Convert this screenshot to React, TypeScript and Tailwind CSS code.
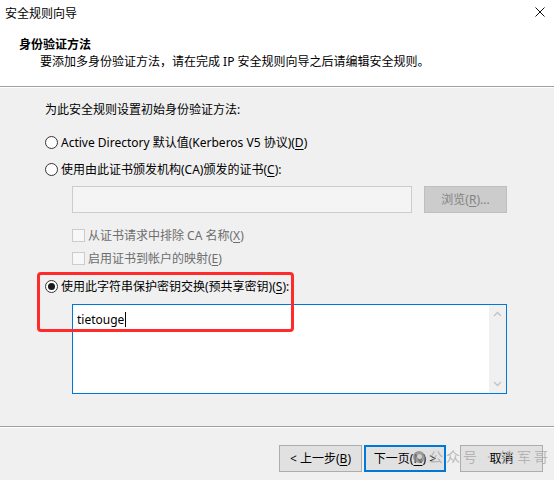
import { ReactNode } from "react";

function U({ children }: { children: ReactNode }) {
  return <span className="underline underline-offset-2">{children}</span>;
}

function Radio({ checked }: { checked?: boolean }) {
  return (
    <span className="flex h-[13px] w-[13px] shrink-0 items-center justify-center rounded-full border border-[#333333] bg-white">
      {checked && <span className="h-[7px] w-[7px] rounded-full bg-[#1a1a1a]" />}
    </span>
  );
}

function Check() {
  return <span className="h-[13px] w-[13px] shrink-0 border border-[#cccccc] bg-[#f7f7f7]" />;
}

function App() {
  return (
    <div className="relative h-[480px] w-[554px] overflow-hidden bg-[#f0f0f0] font-['Noto_Sans','Noto_Sans_CJK_SC',sans-serif] text-[12px] leading-[17px] text-black">
      {/* Header */}
      <div className="h-[86px] bg-white">
        <div className="flex h-[26px] items-center justify-between pl-[5px] pr-[9px]">
          <span>安全规则向导</span>
          <svg width="10" height="10" viewBox="0 0 10 10" className="mt-[-2px]">
            <path d="M0.5 0.5 L9.5 9.5 M9.5 0.5 L0.5 9.5" stroke="#111" strokeWidth="1" />
          </svg>
        </div>
        <div className="mt-[10px] pl-[19px] font-bold">身份验证方法</div>
        <div className="pl-[40px]">要添加多身份验证方法，请在完成 IP 安全规则向导之后请编辑安全规则。</div>
      </div>
      <div className="h-px bg-[#a0a0a0]" />
      <div className="h-px bg-white" />

      {/* Body */}
      <div className="flex h-[338px] flex-col pl-[45px]">
        <div className="mt-[13px] h-[17px]">为此安全规则设置初始身份验证方法:</div>
        <div className="mt-[16px] flex h-[17px] items-center gap-[3px]">
          <Radio />
          <span>
            Active Directory 默认值(Kerberos V5 协议)(<U>D</U>)
          </span>
        </div>
        <div className="mt-[10px] flex h-[17px] items-center gap-[3px]">
          <Radio />
          <span>
            使用由此证书颁发机构(CA)颁发的证书(<U>C</U>):
          </span>
        </div>
        <div className="mt-[8px] flex h-[27px] pl-[27px]">
          <div className="h-[27px] w-[340px] border border-[#cccccc] bg-[#f4f4f4]" />
          <div className="ml-[12px] flex h-[27px] w-[83px] items-center justify-center border border-[#bfbfbf] bg-[#cccccc] text-[#838383]">
            <span>
              浏览(<U>R</U>)...
            </span>
          </div>
        </div>
        <div className="mt-[14px] flex h-[17px] items-center gap-[3px] pl-[27px] text-[#6d6d6d]">
          <Check />
          <span>
            从证书请求中排除 CA 名称(<U>X</U>)
          </span>
        </div>
        <div className="mt-[6px] flex h-[17px] items-center gap-[3px] pl-[27px] text-[#6d6d6d]">
          <Check />
          <span>
            启用证书到帐户的映射(<U>E</U>)
          </span>
        </div>
        <div className="mt-[11px] flex h-[17px] items-center gap-[3px]">
          <Radio checked />
          <span>
            使用此字符串保护密钥交换(预共享密钥)(<U>S</U>):
          </span>
        </div>
        <div className="ml-[27px] mt-[9px] flex h-[90px] w-[435px] border border-[#0078d7] bg-white">
          <div className="flex-1 pl-[4px] pt-[4px]">
            <span>tietouge</span>
            <span className="ml-px inline-block h-[15px] w-px translate-y-[3px] bg-black" />
          </div>
          <div className="flex w-[17px] flex-col items-center justify-between bg-[#f0f0f0] py-[6px]">
            <svg width="9" height="6" viewBox="0 0 9 6">
              <path d="M1 5 L4.5 1.5 L8 5" stroke="#c2c2c2" strokeWidth="1.3" fill="none" />
            </svg>
            <svg width="9" height="6" viewBox="0 0 9 6">
              <path d="M1 1 L4.5 4.5 L8 1" stroke="#c2c2c2" strokeWidth="1.3" fill="none" />
            </svg>
          </div>
        </div>
      </div>

      {/* Footer */}
      <div className="h-px bg-[#a0a0a0]" />
      <div className="h-px bg-white" />
      <div className="flex justify-end pr-[11px] pt-[17px]">
        <button className="flex h-[27px] w-[83px] items-center justify-center border border-[#adadad] bg-[#e1e1e1]">
          <span>
            &lt; 上一步(<U>B</U>)
          </span>
        </button>
        <button className="ml-[2px] flex h-[27px] w-[82px] items-center justify-center border-2 border-[#0078d7] bg-[#e1e1e1]">
          <span>
            下一页(<U>N</U>) &gt;
          </span>
        </button>
        <button className="ml-[14px] flex h-[27px] w-[83px] items-center justify-center border border-[#adadad] bg-[#e1e1e1]">
          取消
        </button>
      </div>

      {/* Annotation */}
      <div className="absolute left-[37px] top-[272px] h-[60px] w-[257px] rounded-[4px] border-[3px] border-[#ff2a2a]" />

      {/* Watermark */}
      <div className="pointer-events-none absolute left-[413px] top-[448px] flex items-center gap-[4px] text-[14px] text-[#a8a8a8]/80">
        <span className="flex h-[12px] w-[12px] items-center justify-center rounded-full bg-[#8a8a8a]/80">
          <span className="h-[5px] w-[5px] rounded-full bg-[#d0d0d0]" />
        </span>
        <span className="tracking-[3px]">公众号 · 铁军哥</span>
      </div>
    </div>
  );
}

export default App;
